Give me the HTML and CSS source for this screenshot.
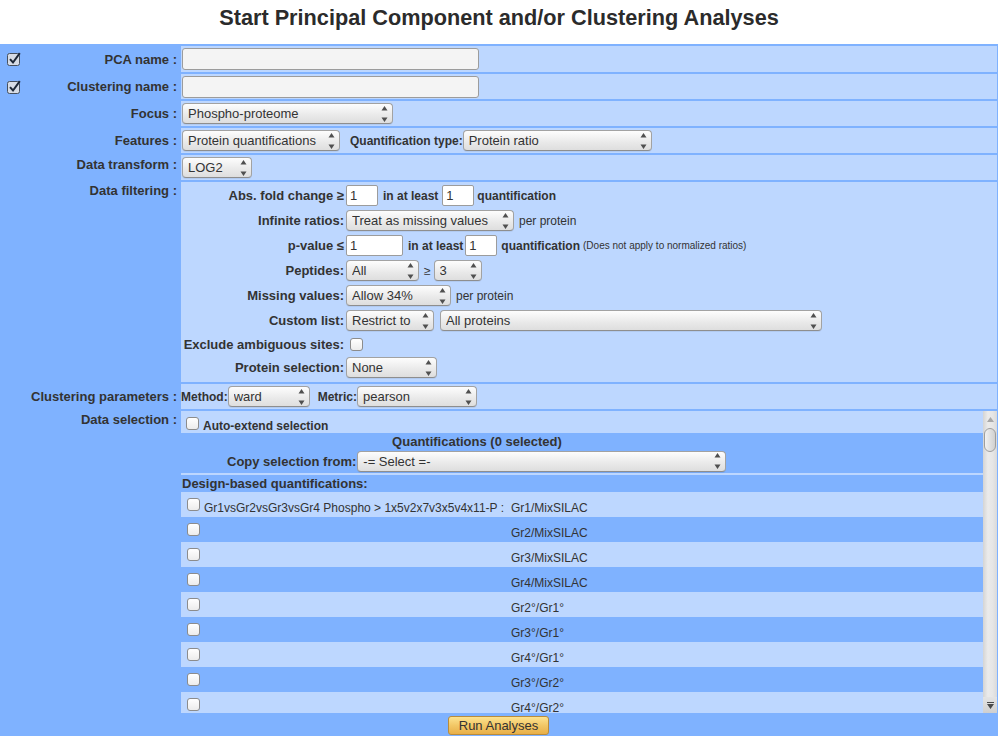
FILE: index.html
```html
<!DOCTYPE html>
<html>
<head>
<meta charset="utf-8">
<title>Start Principal Component and/or Clustering Analyses</title>
<link rel="stylesheet" href="styles.css">
</head>
<body>
<h1 class="title">Start Principal Component and/or Clustering Analyses</h1>
<div class="form">
  <div class="lab chk"><svg class="cb" width="15" height="14" viewBox="0 0 15 14"><rect x="0.5" y="1.5" width="12" height="12" rx="2" fill="#d6dce6" stroke="#46505e"/><path d="M3 7.2 L6 10.5 L12.8 1.2" fill="none" stroke="#1d2838" stroke-width="2"/></svg><span>PCA name :</span></div>
  <div class="val h26"><input class="txt" type="text"></div>

  <div class="lab chk"><svg class="cb" width="15" height="14" viewBox="0 0 15 14"><rect x="0.5" y="1.5" width="12" height="12" rx="2" fill="#d6dce6" stroke="#46505e"/><path d="M3 7.2 L6 10.5 L12.8 1.2" fill="none" stroke="#1d2838" stroke-width="2"/></svg><span>Clustering name :</span></div>
  <div class="val h25"><input class="txt" type="text"></div>

  <div class="lab">Focus :</div>
  <div class="val h25"><span class="sel w211"><select><option>Phospho-proteome</option></select><svg class="arr" viewBox="0 0 7 18"><path d="M3.5 1L6.5 5.5H0.5Z M0.5 12.5H6.5L3.5 17Z"/></svg></span></div>

  <div class="lab">Features :</div>
  <div class="val h25"><span class="sel w158"><select><option>Protein quantifications</option></select><svg class="arr" viewBox="0 0 7 18"><path d="M3.5 1L6.5 5.5H0.5Z M0.5 12.5H6.5L3.5 17Z"/></svg></span><span class="b12 ml10">Quantification type:</span><span class="sel w189"><select><option>Protein ratio</option></select><svg class="arr" viewBox="0 0 7 18"><path d="M3.5 1L6.5 5.5H0.5Z M0.5 12.5H6.5L3.5 17Z"/></svg></span></div>

  <div class="lab top pt2">Data transform :</div>
  <div class="val h25"><span class="sel w70"><select><option>LOG2</option></select><svg class="arr" viewBox="0 0 7 18"><path d="M3.5 1L6.5 5.5H0.5Z M0.5 12.5H6.5L3.5 17Z"/></svg></span></div>

  <div class="lab top">Data filtering :</div>
  <div class="val filt">
    <div class="fgrid">
      <div class="flab">Abs. fold change ≥</div>
      <div class="fctl"><input class="num w32" type="text" value="1"><span class="b12 ml5">in at least</span><input class="num w32 ml4" type="text" value="1"><span class="b12 ml3">quantification</span></div>

      <div class="flab">Infinite ratios:</div>
      <div class="fctl"><span class="sel w168"><select><option>Treat as missing values</option></select><svg class="arr" viewBox="0 0 7 18"><path d="M3.5 1L6.5 5.5H0.5Z M0.5 12.5H6.5L3.5 17Z"/></svg></span><span class="ml5">per protein</span></div>

      <div class="flab">p-value ≤</div>
      <div class="fctl"><input class="num w57" type="text" value="1"><span class="b12 ml5">in at least</span><input class="num w32 ml2" type="text" value="1"><span class="b12 ml4">quantification</span><span class="note ml3">(Does not apply to normalized ratios)</span></div>

      <div class="flab">Peptides:</div>
      <div class="fctl"><span class="sel w73"><select><option>All</option></select><svg class="arr" viewBox="0 0 7 18"><path d="M3.5 1L6.5 5.5H0.5Z M0.5 12.5H6.5L3.5 17Z"/></svg></span><span class="ml5">≥</span><span class="sel w48 ml3"><select><option>3</option></select><svg class="arr" viewBox="0 0 7 18"><path d="M3.5 1L6.5 5.5H0.5Z M0.5 12.5H6.5L3.5 17Z"/></svg></span></div>

      <div class="flab">Missing values:</div>
      <div class="fctl"><span class="sel w105"><select><option>Allow 34%</option></select><svg class="arr" viewBox="0 0 7 18"><path d="M3.5 1L6.5 5.5H0.5Z M0.5 12.5H6.5L3.5 17Z"/></svg></span><span class="ml5">per protein</span></div>

      <div class="flab">Custom list:</div>
      <div class="fctl"><span class="sel w88"><select><option>Restrict to</option></select><svg class="arr" viewBox="0 0 7 18"><path d="M3.5 1L6.5 5.5H0.5Z M0.5 12.5H6.5L3.5 17Z"/></svg></span><span class="sel w382 ml6"><select><option>All proteins</option></select><svg class="arr" viewBox="0 0 7 18"><path d="M3.5 1L6.5 5.5H0.5Z M0.5 12.5H6.5L3.5 17Z"/></svg></span></div>

      <div class="flab">Exclude ambiguous sites:</div>
      <div class="fctl"><input class="ucb excl" type="checkbox"></div>

      <div class="flab">Protein selection:</div>
      <div class="fctl"><span class="sel w91"><select><option>None</option></select><svg class="arr" viewBox="0 0 7 18"><path d="M3.5 1L6.5 5.5H0.5Z M0.5 12.5H6.5L3.5 17Z"/></svg></span></div>
    </div>
  </div>

  <div class="lab">Clustering parameters :</div>
  <div class="val h25 p0"><span class="b12">Method:</span><span class="sel w82"><select><option>ward</option></select><svg class="arr" viewBox="0 0 7 18"><path d="M3.5 1L6.5 5.5H0.5Z M0.5 12.5H6.5L3.5 17Z"/></svg></span><span class="b12 ml8">Metric:</span><span class="sel w120"><select><option>pearson</option></select><svg class="arr" viewBox="0 0 7 18"><path d="M3.5 1L6.5 5.5H0.5Z M0.5 12.5H6.5L3.5 17Z"/></svg></span></div>

  <div class="lab top">Data selection :</div>
  <div class="val dsel">
    <div class="dscroll">
      <div class="autoext"><input class="ucb" type="checkbox"><span>Auto-extend selection</span></div>
      <div class="qhead">
        <div class="qtitle">Quantifications (0 selected)</div>
        <div class="copy"><span>Copy selection from:</span><span class="sel w369 ml1"><select><option>-= Select =-</option></select><svg class="arr" viewBox="0 0 7 18"><path d="M3.5 1L6.5 5.5H0.5Z M0.5 12.5H6.5L3.5 17Z"/></svg></span></div>
      </div>
      <div class="design">Design-based quantifications:</div>
      <div class="qrow"><input class="ucb" type="checkbox"><span>Gr1vsGr2vsGr3vsGr4 Phospho &gt; 1x5v2x7v3x5v4x11-P :</span><span>Gr1/MixSILAC</span></div>
      <div class="qrow alt"><input class="ucb" type="checkbox"><span></span><span>Gr2/MixSILAC</span></div>
      <div class="qrow"><input class="ucb" type="checkbox"><span></span><span>Gr3/MixSILAC</span></div>
      <div class="qrow alt"><input class="ucb" type="checkbox"><span></span><span>Gr4/MixSILAC</span></div>
      <div class="qrow"><input class="ucb" type="checkbox"><span></span><span>Gr2°/Gr1°</span></div>
      <div class="qrow alt"><input class="ucb" type="checkbox"><span></span><span>Gr3°/Gr1°</span></div>
      <div class="qrow"><input class="ucb" type="checkbox"><span></span><span>Gr4°/Gr1°</span></div>
      <div class="qrow alt"><input class="ucb" type="checkbox"><span></span><span>Gr3°/Gr2°</span></div>
      <div class="qrow"><input class="ucb" type="checkbox"><span></span><span>Gr4°/Gr2°</span></div>
    </div>
    <div class="vsb">
      <div class="sb-btn"><svg width="7" height="5" viewBox="0 0 7 5"><path d="M3.5 0L7 5H0Z" fill="#a8a8a8"/></svg></div>
      <div class="sb-thumb"></div>
      <div class="sb-fill"></div>
      <div class="sb-btn down"><svg width="7" height="7" viewBox="0 0 7 7"><path d="M0 0H7V1H0Z M0 2H7L3.5 7Z" fill="#4a4a4a"/></svg></div>
    </div>
  </div>

  <div class="actions"><button class="run" type="button">Run Analyses</button></div>
</div>
</body>
</html>
```

FILE: styles.css
```css
* { box-sizing: border-box; }
html, body { margin: 0; padding: 0; }
body {
  font-family: "Liberation Sans", Arial, sans-serif;
  color: #333;
  background: #fff;
  width: 998px;
  height: 736px;
  overflow: hidden;
}
.title {
  margin: 0;
  height: 44px;
  padding-top: 5px;
  font-size: 21.7px;
  line-height: 26px;
  font-weight: bold;
  text-align: center;
  color: #2b2b2b;
}
.form {
  display: grid;
  grid-template-columns: 179px 1fr;
  gap: 2px;
  padding: 2px 1px 0 0;
  background: #7fb2ff;
}
.lab {
  font-weight: bold;
  font-size: 13px;
  display: flex;
  align-items: center;
  justify-content: flex-end;
  padding-right: 2px;
  white-space: nowrap;
}
.lab.top { align-items: flex-start; line-height: 16px; padding-top: 1px; }
.lab.top.pt2 { padding-top: 2px; }
.lab.chk { justify-content: space-between; padding-left: 7px; }
.cb { display: block; flex: none; }
.val {
  background: #bdd7ff;
  display: flex;
  align-items: center;
  padding-left: 1px;
  font-size: 12px;
  white-space: nowrap;
}
.val.p0 { padding-left: 0; }
.h26 { height: 26px; }
.h25 { height: 25px; }

.b12 { font-weight: bold; font-size: 12px; }
.note { font-size: 10px; }

.txt {
  width: 297px;
  height: 22px;
  margin: 0;
  border: 1px solid #9c9c9c;
  border-radius: 3px;
  background: #f4f4f4;
}
.num {
  height: 21px;
  margin: 0;
  padding: 0 3px;
  border: 1px solid #9c9c9c;
  border-radius: 2px;
  background: #fff;
  font: 13px "Liberation Sans", Arial, sans-serif;
  color: #333;
}
.w32 { width: 32px; }
.w57 { width: 57px; }

.sel {
  position: relative;
  display: inline-block;
  height: 21px;
  flex: none;
}
.sel select {
  -webkit-appearance: none;
  appearance: none;
  display: block;
  width: 100%;
  height: 100%;
  margin: 0;
  padding: 0 16px 0 5px;
  border: 1px solid #a2a2a2;
  border-bottom-color: #8e8e8e;
  border-radius: 4px;
  background: linear-gradient(#fdfdfd, #e9e9e9 60%, #dedede);
  font: 13px "Liberation Sans", Arial, sans-serif;
  color: #333;
  box-shadow: 0 1px 0 rgba(0, 0, 0, 0.06);
}
.sel .arr {
  position: absolute;
  right: 5px;
  top: 50%;
  margin-top: -9px;
  width: 7px;
  height: 18px;
  fill: #505050;
  pointer-events: none;
}
.w48 { width: 48px; }
.w70 { width: 70px; }
.w73 { width: 73px; }
.w82 { width: 82px; }
.w88 { width: 88px; }
.w91 { width: 91px; }
.w105 { width: 105px; }
.w120 { width: 120px; }
.w158 { width: 158px; }
.w168 { width: 168px; }
.w189 { width: 189px; }
.w211 { width: 211px; }
.w369 { width: 369px; }
.w382 { width: 382px; }

.ucb {
  -webkit-appearance: none;
  appearance: none;
  width: 13px;
  height: 13px;
  margin: 0;
  flex: none;
  border: 1px solid #8c8c8c;
  border-radius: 3px;
  background: linear-gradient(#ffffff, #ececec);
}
.fctl .ucb.excl { margin-left: 4px; }

/* spacing utilities, after the base rules so they take effect */
.ml1 { margin-left: 1px; }
.ml2 { margin-left: 2px; }
.ml3 { margin-left: 3px; }
.ml4 { margin-left: 4px; }
.ml5 { margin-left: 5px; }
.ml6 { margin-left: 6px; }
.ml8 { margin-left: 8px; }
.ml10 { margin-left: 10px; }

.filt {
  height: 200px;
  align-items: flex-start;
  padding: 1px 0 0 0;
}
.fgrid {
  display: grid;
  grid-template-columns: 163px auto;
  grid-template-rows: 25px 25px 25px 25px 25px 25px 22px 25px;
  column-gap: 2px;
}
.flab {
  display: flex;
  align-items: center;
  justify-content: flex-end;
  font-weight: bold;
  font-size: 13px;
  white-space: nowrap;
}
.fctl {
  display: flex;
  align-items: center;
  font-size: 12px;
  white-space: nowrap;
}

.dsel {
  height: 302px;
  padding: 0;
  align-items: stretch;
  overflow: hidden;
}
.dscroll {
  flex: 1;
  overflow: hidden;
  min-width: 0;
}
.autoext {
  height: 22px;
  display: flex;
  align-items: flex-start;
}
.autoext .ucb { margin: 6px 0 0 5px; }
.autoext span {
  margin: 8px 0 0 4px;
  line-height: 14px;
  font-weight: bold;
  font-size: 12px;
}
.qhead {
  background: #7fb2ff;
  height: 40px;
  padding: 1px 0;
}
.qtitle {
  width: 592px;
  text-align: center;
  font-weight: bold;
  font-size: 13px;
  line-height: 16px;
}
.copy {
  display: flex;
  align-items: center;
  height: 22px;
  padding-left: 46px;
  font-weight: bold;
  font-size: 13px;
}
.design {
  margin-top: 2px;
  height: 17px;
  line-height: 17px;
  padding-left: 1px;
  background: #7fb2ff;
  font-weight: bold;
  font-size: 13px;
}
.qrow {
  display: grid;
  grid-template-columns: 23px 307px 1fr;
  align-items: start;
  height: 25px;
  font-size: 12px;
  white-space: nowrap;
}
.qrow.alt { background: #7fb2ff; }
.qrow .ucb { margin: 6px 0 0 6px; }
.qrow span {
  padding-top: 9px;
  line-height: 14px;
}

.vsb {
  width: 14px;
  flex: none;
  display: flex;
  flex-direction: column;
  align-items: center;
  background: linear-gradient(90deg, #d4d4d4, #ebebeb 35%, #e6e6e6 70%, #dadada);
}
.sb-btn {
  height: 16px;
  width: 100%;
  display: flex;
  align-items: center;
  justify-content: center;
}
.sb-btn svg { display: block; }
.sb-btn.down { background: linear-gradient(#e4e4e4, #cfcfcf); }
.sb-thumb {
  width: 12px;
  height: 24px;
  margin-top: 1px;
  border: 1px solid #9e9e9e;
  border-radius: 6px;
  background: linear-gradient(90deg, #f2f2f2, #d0d0d0);
}
.sb-fill { flex: 1; }

.actions {
  grid-column: 1 / -1;
  height: 21px;
  display: flex;
  justify-content: center;
  align-items: flex-start;
  padding-top: 1px;
}
.run {
  width: 101px;
  height: 19px;
  margin: 0;
  padding: 0;
  border: 1px solid #b98c3c;
  border-radius: 3px;
  background: linear-gradient(#fde38f, #f2c766 50%, #e8af48);
  font: 13px "Liberation Sans", Arial, sans-serif;
  color: #333;
}
```
